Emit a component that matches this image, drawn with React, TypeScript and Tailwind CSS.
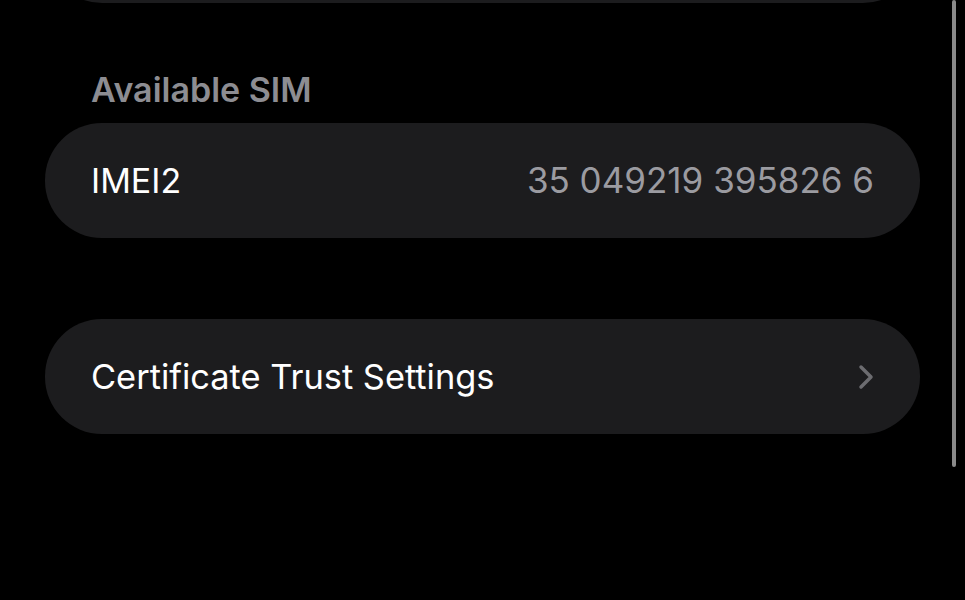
import React from "react";

export default function App() {
  const font = { fontFamily: 'Inter, "Liberation Sans", sans-serif' };
  return (
    <div className="relative h-[600px] w-[965px] overflow-hidden bg-black" style={font}>
      <div className="flex flex-col pl-[45px] pr-[45px]">
        <div className="-mt-[112px] h-[115px] rounded-[57px] bg-[#1c1c1e]" />
        <div className="mt-[67px] h-[53px] pl-[46px] text-[34px] font-semibold leading-[40px] text-[#8d8d92]">
          Available SIM
        </div>
        <div className="flex h-[115px] items-center justify-between rounded-[57px] bg-[#1c1c1e] px-[46px]">
          <span className="text-[34px] text-white">IMEI2</span>
          <span className="text-[35px] text-[#9b9ba1]">35 049219 395826 6</span>
        </div>
        <div className="mt-[81px] flex h-[115px] items-center justify-between rounded-[57px] bg-[#1c1c1e] pl-[46px] pr-[46px]">
          <span className="text-[34.4px] text-white">Certificate Trust Settings</span>
          <svg width="16" height="26" viewBox="0 0 16 26" fill="none">
            <path d="M3 3 L13 13 L3 23" stroke="#6c6c70" strokeWidth="3.5" strokeLinecap="round" strokeLinejoin="round" />
          </svg>
        </div>
      </div>
      <div className="absolute right-[9px] top-0 h-[467px] w-[4px] rounded-full bg-[#8a8a8a]" />
    </div>
  );
}
